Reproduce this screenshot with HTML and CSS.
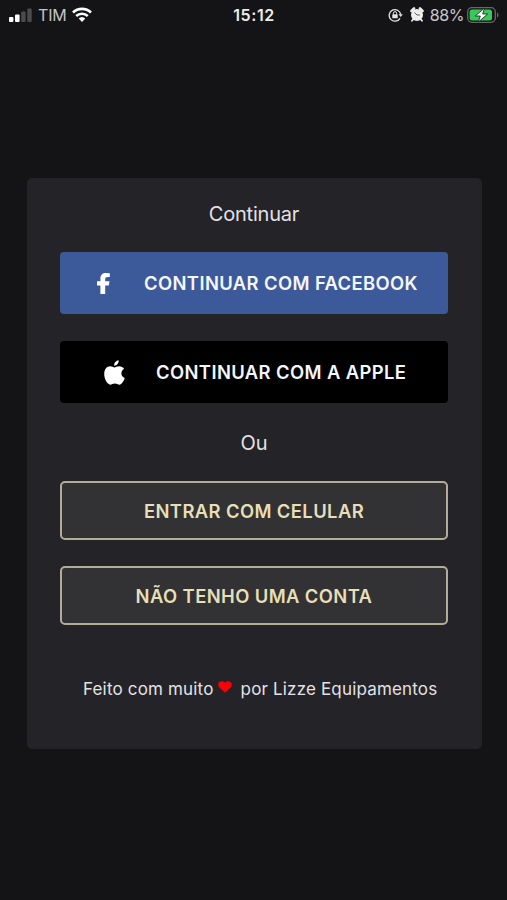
FILE: index.html
```html
<!DOCTYPE html>
<html lang="pt-BR">
<head>
    <meta charset="UTF-8">
    <meta name="viewport" content="width=device-width, initial-scale=1.0">
    <title>Continuar</title>
    <link rel="stylesheet" href="styles.css">
</head>
<body>
    <header class="status-bar">
        <div class="status-left">
            <svg class="signal" width="23" height="14" viewBox="0 0 23 14">
                <rect x="0" y="9" width="4.4" height="5" rx="1" fill="#fff"/>
                <rect x="6" y="6.5" width="4.6" height="7.5" rx="1" fill="#fff"/>
                <rect x="12.2" y="3.5" width="4.4" height="10.5" rx="1" fill="#4b4b4d"/>
                <rect x="18.3" y="0.5" width="4.4" height="13.5" rx="1" fill="#4b4b4d"/>
            </svg>
            <span class="carrier">TIM</span>
            <svg class="wifi" width="20" height="15" viewBox="0 0 20 15">
                <path d="M1 5.5a13 13 0 0 1 18 0" fill="none" stroke="#fff" stroke-width="2.7"/>
                <path d="M4.2 9a8.4 8.4 0 0 1 11.6 0" fill="none" stroke="#fff" stroke-width="2.5"/>
                <path d="M10 15l-3.3-3.4a4.8 4.8 0 0 1 6.6 0z" fill="#fff"/>
            </svg>
        </div>
        <span class="clock">15:12</span>
        <div class="status-right">
            <svg class="lock" width="15" height="14" viewBox="0 0 15 14">
                <path d="M12 10.3A5.8 5.8 0 1 1 12.7 6.4" fill="none" stroke="#e4e4e6" stroke-width="1.3"/>
                <path d="M10.5 6.2h4.3l-2.1 2.8z" fill="#e4e4e6"/>
                <rect x="4.3" y="6.3" width="5.4" height="4" rx="0.6" fill="#e4e4e6"/>
                <path d="M5.4 6.5V5.2a1.6 1.6 0 0 1 3.2 0v1.3" fill="none" stroke="#e4e4e6" stroke-width="1"/>
            </svg>
            <svg class="alarm" width="14" height="15" viewBox="0 0 14 15">
                <circle cx="7" cy="8" r="6" fill="#eee"/>
                <path d="M1.5 4l2.5-2.5M12.5 4L10 1.5" stroke="#eee" stroke-width="2.6" stroke-linecap="round"/>
                <path d="M3 12.5l-1 1.3M11 12.5l1 1.3" stroke="#eee" stroke-width="1.8" stroke-linecap="round"/>
                <path d="M4.5 5.6L7 8h2.8" fill="none" stroke="#4a4a4c" stroke-width="0.9"/>
            </svg>
            <span class="percent">88%</span>
            <svg class="battery" width="32" height="16" viewBox="0 0 32 16">
                <rect x="0.7" y="0.7" width="27.6" height="14.6" rx="4.2" fill="none" stroke="#68686b" stroke-width="1.3"/>
                <rect x="2.6" y="2.6" width="22.4" height="10.8" rx="2.5" fill="#36c95a"/>
                <path d="M30 5.5c2 .8 2 4.2 0 5z" fill="#68686b"/>
                <path d="M17.5 1L8.3 9h5l-2 6 9.4-8h-5z" fill="#fff" stroke="#161618" stroke-width="0.8"/>
            </svg>
        </div>
    </header>

    <main class="card">
        <p class="title">Continuar</p>
        <button class="btn btn-facebook">
            <svg class="facebook-icon" width="13" height="21" viewBox="0 0 13 21">
                <path d="M3.4 21V12.4H0V8.2h3.4V5.6C3.4 2 5.5 0 8.8 0c1.6 0 4 .3 4 .3v3.7h-2C8.9 4 8.2 4.8 8.2 6v2.2h4.3l-.7 4.2H8.2V21z" fill="#fff"/>
            </svg>
            <span>CONTINUAR COM FACEBOOK</span>
        </button>
        <button class="btn btn-apple">
            <svg class="apple-icon" width="21" height="25" viewBox="0 0 21 25">
                <path d="M14.7.3c.2 2.9-1.9 5.4-4.6 5.5C9.9 3 12.2.6 14.7.3z" fill="#fff"/>
                <path d="M10.5 7.4c1.1 0 2.5-1.2 4.7-1.2 2 0 3.9 1 4.9 2.5-3.9 2.3-3.5 7.7.7 9.3-.9 2.6-3 6.7-5.4 6.7-1.7 0-2.5-1.1-4.6-1.1s-2.9 1.1-4.5 1.1C3.2 24.7.2 18.9.2 14.1.2 9 3.1 6.3 6.1 6.3c1.9 0 3.3 1.1 4.4 1.1z" fill="#fff"/>
            </svg>
            <span>CONTINUAR COM A APPLE</span>
        </button>
        <p class="divider">Ou</p>
        <button class="btn btn-outline btn-phone">ENTRAR COM CELULAR</button>
        <button class="btn btn-outline btn-signup">NÃO TENHO UMA CONTA</button>
        <footer class="credits">
            <span>Feito com muito</span>
            <svg class="heart" width="14" height="12" viewBox="0 0 14 12">
                <path d="M7 11.8L1.2 6.2C-2 2.6 3-2 7 1.7 11-2 16 2.6 12.8 6.2z" fill="#fb0007"/>
            </svg>
            <span>por Lizze Equipamentos</span>
        </footer>
    </main>
</body>
</html>
```
FILE: styles.css
```css
* {
    box-sizing: border-box;
}
body {
    margin: 0;
    height: 100vh;
    overflow: hidden;
    background-color: #141416;
    color: #e2e2e6;
    font-family: Inter, "Liberation Sans", sans-serif;
}
p {
    margin: 0;
}
.status-bar {
    display: grid;
    grid-template-columns: 1fr auto 1fr;
    align-items: center;
    height: 30px;
    padding: 0 8px 0 9px;
    font-size: 16px;
    line-height: 20px;
}
.status-left,
.status-right {
    display: flex;
    align-items: center;
    padding-bottom: 1px;
}
.status-right {
    justify-content: flex-end;
}
.carrier {
    margin: 0 6px;
    color: #c4c4c7;
    letter-spacing: -0.2px;
}
.clock {
    font-weight: 600;
    letter-spacing: 0.6px;
    color: #ececee;
}
.alarm {
    margin: 0 6px 0 7px;
}
.percent {
    margin-right: 3px;
    color: #c9c9cc;
    letter-spacing: -0.4px;
}
.card {
    display: flex;
    flex-direction: column;
    width: 455px;
    height: 571px;
    margin: 148px 0 0 27px;
    padding: 23px 34px 0 33px;
    border-radius: 5px;
    background-color: #242327;
}
.title,
.divider {
    text-align: center;
    font-size: 20px;
    line-height: 26px;
}
.title {
    margin-bottom: 25px;
    letter-spacing: -0.2px;
}
.divider {
    margin: 27px 0 25px;
}
.btn {
    display: flex;
    align-items: center;
    height: 62px;
    padding: 0;
    border: none;
    border-radius: 4px;
    color: #f4f6fc;
    font-family: inherit;
    font-size: 18.4px;
    font-weight: 600;
    line-height: 22px;
    letter-spacing: 0.4px;
    white-space: nowrap;
}
.btn-facebook {
    margin-bottom: 27px;
    padding-left: 37px;
    gap: 34px;
    background-color: #3c5a9a;
}
.btn-apple {
    padding-left: 44px;
    gap: 31px;
    background-color: #000;
}
.btn-outline {
    justify-content: center;
    height: 59px;
    border: 2px solid #b2ad98;
    border-radius: 5px;
    background-color: #323133;
    color: #e6dfb8;
}
.btn-phone {
    margin-bottom: 26px;
}
.credits {
    display: flex;
    align-items: center;
    margin-top: 52px;
    padding-left: 23px;
    font-size: 17px;
    line-height: 24px;
    letter-spacing: 0.17px;
    white-space: nowrap;
}
.heart {
    margin: 0 9px 4px 4px;
}
```
